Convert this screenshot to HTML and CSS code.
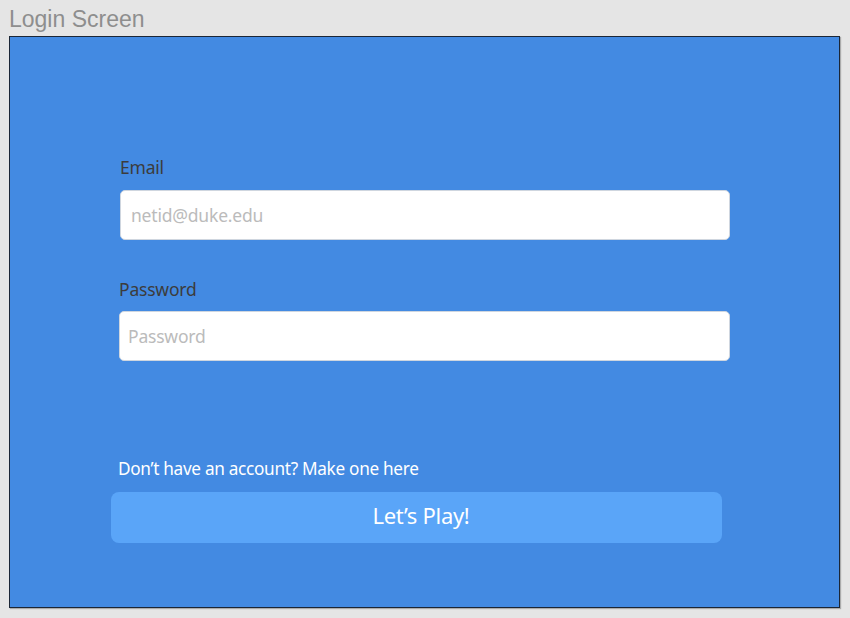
FILE: index.html
```html
<!DOCTYPE html>
<html>
<head>
<meta charset="utf-8">
<link rel="stylesheet" href="styles.css">
</head>
<body>
<div class="title">Login Screen</div>
<div class="frame">
  <div class="form">
    <label class="label email-label">Email</label>
    <div class="input email-input"><span class="ph email-ph">netid@duke.edu</span></div>
    <label class="label pw-label">Password</label>
    <div class="input pw-input"><span class="ph pw-ph">Password</span></div>
    <div class="signup">Don’t have an account? Make one here</div>
    <button class="play">Let’s Play!</button>
  </div>
</div>
</body>
</html>
```
FILE: styles.css
```css
html, body {
  margin: 0;
  padding: 0;
  background: #e5e5e5;
  width: 850px;
  height: 618px;
  overflow: hidden;
}
body {
  padding: 6px 0 0 9px;
  box-sizing: border-box;
  font-family: "Noto Sans", sans-serif;
}
.title {
  font-family: "Liberation Sans", Arial, sans-serif;
  font-size: 23px;
  line-height: 26px;
  color: #8e8e8e;
  height: 30px;
}
.frame {
  width: 831px;
  height: 572px;
  box-sizing: border-box;
  background: #438ae2;
  border: 1px solid #1b2636;
  box-shadow: 1px 1px 1px rgba(0,0,0,0.25);
}
.form {
  display: flex;
  flex-direction: column;
  align-items: flex-start;
  padding: 119px 0 0 101px;
}
.label {
  font-size: 17.5px;
  line-height: 22px;
  color: #3c3c3c;
  letter-spacing: -0.2px;
}
.email-label { margin-left: 9px; }
.pw-label { margin-left: 8px; margin-top: 38px; }
.input {
  width: 610px;
  height: 50px;
  box-sizing: border-box;
  background: #fff;
  border: 1px solid #cfd6df;
  border-radius: 5px;
  display: flex;
  align-items: center;
}
.email-input { margin-left: 9px; margin-top: 12px; padding-left: 10px; }
.pw-input { margin-left: 8px; margin-top: 11px; padding-left: 8px; width: 611px; }
.ph {
  font-size: 17.5px;
  color: #bbbbbb;
  letter-spacing: -0.2px;
}
.signup {
  margin-left: 7px;
  margin-top: 97px;
  font-size: 17.2px;
  line-height: 22px;
  color: #ffffff;
  letter-spacing: -0.3px;
}
.play {
  margin-top: 12px;
  width: 611px;
  height: 51px;
  border: none;
  border-radius: 8px;
  background: #5aa5f8;
  color: #ffffff;
  font-family: "Noto Sans", sans-serif;
  font-size: 22px;
  letter-spacing: -0.3px;
  padding: 0 0 5px 9px;
}
```
